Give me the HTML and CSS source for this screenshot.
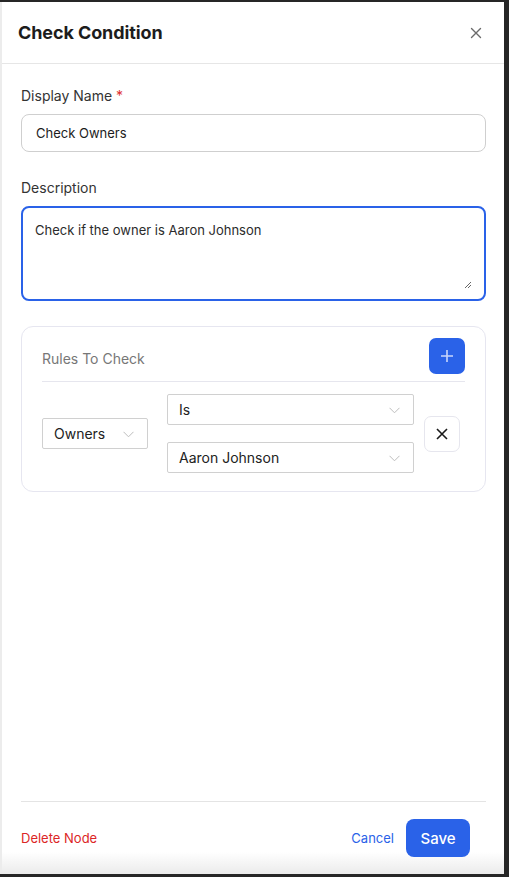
FILE: index.html
```html
<!DOCTYPE html>
<html lang="en">
<head>
<meta charset="utf-8">
<title>Check Condition</title>
<link rel="stylesheet" href="styles.css">
</head>
<body>
<div class="panel">
  <header class="panel-header">
    <h1 class="title">Check Condition</h1>
    <button class="close" aria-label="Close">
      <svg width="12" height="12" viewBox="0 0 12 12"><path d="M1.5 1.5 L10.5 10.5 M10.5 1.5 L1.5 10.5" stroke="#6b6b6b" stroke-width="1.4" fill="none" stroke-linecap="round"/></svg>
    </button>
  </header>
  <main class="panel-body">
    <label class="label">Display Name <span class="req">*</span></label>
    <div class="input">Check Owners</div>
    <label class="label label-desc">Description</label>
    <div class="textarea">Check if the owner is Aaron Johnson
      <svg class="grip" width="9" height="9" viewBox="0 0 9 9"><path d="M8 2 L2 8 M8 5 L5 8" stroke="#666" stroke-width="1" fill="none"/></svg>
    </div>
    <section class="card">
      <div class="card-head">
        <span class="card-title">Rules To Check</span>
        <button class="add" aria-label="Add">
          <svg width="14" height="14" viewBox="0 0 14 14"><path d="M7 1 V13 M1 7 H13" stroke="#c9d6fb" stroke-width="1.6" fill="none"/></svg>
        </button>
      </div>
      <div class="rule">
        <div class="select sel-field">Owners<svg class="chev" width="11" height="7" viewBox="0 0 11 7"><path d="M0.5 0.8 L5.5 5.8 L10.5 0.8" stroke="#bdbdbd" stroke-width="1" fill="none"/></svg></div>
        <div class="stack">
          <div class="select">Is<svg class="chev" width="11" height="7" viewBox="0 0 11 7"><path d="M0.5 0.8 L5.5 5.8 L10.5 0.8" stroke="#bdbdbd" stroke-width="1" fill="none"/></svg></div>
          <div class="select">Aaron Johnson<svg class="chev" width="11" height="7" viewBox="0 0 11 7"><path d="M0.5 0.8 L5.5 5.8 L10.5 0.8" stroke="#bdbdbd" stroke-width="1" fill="none"/></svg></div>
        </div>
        <button class="remove" aria-label="Remove">
          <svg width="12" height="12" viewBox="0 0 12 12"><path d="M1 1 L11 11 M11 1 L1 11" stroke="#1a1a1a" stroke-width="1.6" fill="none"/></svg>
        </button>
      </div>
    </section>
  </main>
  <footer class="panel-footer">
    <button class="link danger">Delete Node</button>
    <div class="actions">
      <button class="link primary">Cancel</button>
      <button class="save">Save</button>
    </div>
  </footer>
</div>
</body>
</html>
```

FILE: styles.css
```css
* { box-sizing: border-box; }
html, body { margin: 0; padding: 0; }
body {
  background: #262626;
  width: 509px;
  height: 877px;
  overflow: hidden;
  font-family: Inter, "Noto Sans", "Liberation Sans", sans-serif;
  color: #2b2b2b;
}
button { font-family: inherit; border: none; background: none; padding: 0; cursor: pointer; }

.panel {
  margin-top: 2px;
  width: 504px;
  height: 872px;
  border-left: 2px solid #ececec;
  background: linear-gradient(to bottom, #ffffff 0, #ffffff calc(100% - 22px), #ebebeb 100%);
  display: flex;
  flex-direction: column;
}

.panel-header {
  height: 62px;
  border-bottom: 1px solid #e6e6e6;
  display: flex;
  align-items: center;
  justify-content: space-between;
  padding: 0 20px 0 16px;
}
.title {
  margin: 0;
  font-size: 18px;
  font-weight: 700;
  color: #1c1c1c;
  letter-spacing: -0.1px;
}
.close { width: 16px; height: 16px; display: flex; align-items: center; justify-content: center; }

.panel-body {
  flex: 1;
  padding: 22px 18px 0 19px;
  display: flex;
  flex-direction: column;
}
.label {
  font-size: 14px;
  line-height: 20px;
  color: #333;
  margin-bottom: 8px;
}
.req { color: #e03131; }
.label-desc { margin-top: 26px; }

.input {
  height: 38px;
  border: 1px solid #cfcfcf;
  border-radius: 8px;
  padding: 0 14px;
  display: flex;
  align-items: center;
  font-size: 13px;
  color: #1c1c1c;
}
.textarea {
  position: relative;
  height: 95px;
  border: 2px solid #2a62e8;
  border-radius: 8px;
  padding: 13px 12px;
  font-size: 13px;
  line-height: 18px;
  color: #2b2b2b;
}
.grip { position: absolute; right: 12px; bottom: 10px; }

.card {
  margin-top: 25px;
  border: 1px solid #e6e6f0;
  border-radius: 12px;
  padding: 11px 20px 18px 20px;
}
.card-head {
  display: flex;
  align-items: center;
  justify-content: space-between;
  padding-bottom: 7px;
  border-bottom: 1px solid #e6e6ee;
}
.card-title { font-size: 14px; color: #777; padding-top: 4px; }
.add {
  width: 36px; height: 36px;
  background: #2a62e8;
  border-radius: 7px;
  display: flex; align-items: center; justify-content: center;
}

.rule {
  margin-top: 12px;
  display: flex;
  align-items: center;
}
.stack { display: flex; flex-direction: column; gap: 17px; margin-left: 19px; }
.select {
  position: relative;
  width: 247px;
  height: 31px;
  border: 1px solid #d0d0d0;
  border-radius: 2px;
  display: flex;
  align-items: center;
  padding: 0 11px;
  font-size: 14px;
  color: #222;
}
.sel-field { width: 106px; }
.chev { position: absolute; right: 13px; top: 12px; }
.remove {
  margin-left: 10px;
  width: 36px; height: 36px;
  border: 1px solid #e6e6ee;
  border-radius: 7px;
  display: flex; align-items: center; justify-content: center;
}

.panel-footer {
  margin: 0 18px 17px 19px;
  border-top: 1px solid #e4e4e4;
  padding-top: 17px;
  display: flex;
  align-items: center;
  justify-content: space-between;
}
.link { font-size: 13px; }
.danger { color: #dc2626; }
.primary { color: #2a62e8; }
.actions { display: flex; align-items: center; gap: 12px; padding-right: 16px; }
.save {
  width: 64px; height: 38px;
  background: #2a62e8;
  color: #fff;
  border-radius: 8px;
  font-size: 15px;
  font-weight: 500;
}
```
